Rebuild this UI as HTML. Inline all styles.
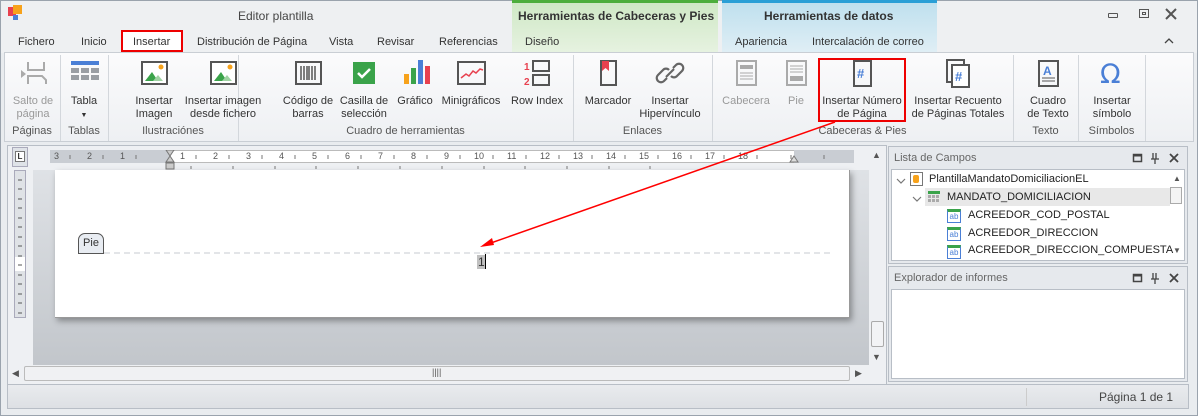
<!DOCTYPE html>
<html><head><meta charset="utf-8"><style>
*{box-sizing:border-box;margin:0;padding:0}
body{width:1198px;height:416px;overflow:hidden;background:#dfe3e8;font-family:"Liberation Sans",sans-serif;font-size:11px;color:#333;position:relative}
.a{position:absolute}
.t{position:absolute;white-space:nowrap}
.btn{position:absolute;top:58px;text-align:center;line-height:13px;font-size:11px;color:#333}
.btn svg{display:block;margin:0 auto 7px}
.gl{position:absolute;top:125px;font-size:11px;color:#555;text-align:center}
.sep{position:absolute;top:55px;width:1px;height:86px;background:#d3d7dc}
.dis{color:#999}
</style></head><body>
<div class="a" style="left:0;top:0;width:1198px;height:416px;border:1px solid #9aa3ad;background:#e9ecef"></div>
<div class="a" style="left:1px;top:1px;width:1196px;height:52px;background:#eef0f2"></div>
<div class="a" style="left:8px;top:7px;width:8px;height:9px;background:#e8414f"></div>
<div class="a" style="left:13px;top:5px;width:9px;height:9px;background:#f7a21b"></div>
<div class="a" style="left:13px;top:15px;width:5px;height:5px;background:#4a7fd6"></div>
<div class="t" style="left:238px;top:9px;font-size:12px;color:#444">Editor plantilla</div>
<div class="a" style="left:512px;top:0;width:206px;height:52px;background:linear-gradient(#cfe8c6,#e6f2e0);border-top:3px solid #4cae3c"></div>
<div class="t" style="left:518px;top:9px;font-size:12px;font-weight:bold;color:#333">Herramientas de Cabeceras y Pies</div>
<div class="a" style="left:722px;top:0;width:215px;height:52px;background:linear-gradient(#bfe0ee,#dfeef5);border-top:3px solid #2a9fd6"></div>
<div class="t" style="left:764px;top:9px;font-size:12px;font-weight:bold;color:#333">Herramientas de datos</div>
<div class="a" style="left:1108px;top:13px;width:10px;height:5px;border:1px solid #555;border-radius:1px"></div>
<div class="a" style="left:1139px;top:9px;width:10px;height:9px;border:1px solid #555"></div>
<div class="a" style="left:1142px;top:12px;width:4px;height:3px;border:1px solid #555"></div>
<svg class="a" style="left:1165px;top:8px" width="12" height="12"><path d="M1 1l10 10M11 1L1 11" stroke="#555" stroke-width="2"/></svg>
<svg class="a" style="left:1164px;top:37px" width="10" height="8"><path d="M1 6l4-4 4 4" stroke="#444" stroke-width="1.3" fill="none"/></svg>
<div class="t" style="left:18px;top:36px">Fichero</div>
<div class="t" style="left:81px;top:36px">Inicio</div>
<div class="a" style="left:121px;top:30px;width:62px;height:22px;border:2px solid #e00;background:#fff"></div>
<div class="t" style="left:133px;top:36px">Insertar</div>
<div class="t" style="left:197px;top:36px">Distribución de Página</div>
<div class="t" style="left:329px;top:36px">Vista</div>
<div class="t" style="left:377px;top:36px">Revisar</div>
<div class="t" style="left:439px;top:36px">Referencias</div>
<div class="t" style="left:525px;top:36px">Diseño</div>
<div class="t" style="left:735px;top:36px">Apariencia</div>
<div class="t" style="left:812px;top:36px">Intercalación de correo</div>
<div class="a" style="left:4px;top:52px;width:1190px;height:90px;background:linear-gradient(#fbfbfc,#eef0f3);border:1px solid #c9ced4"></div>
<div class="sep" style="left:60px"></div><div class="sep" style="left:108px"></div><div class="sep" style="left:238px"></div><div class="sep" style="left:573px"></div><div class="sep" style="left:712px"></div><div class="sep" style="left:1013px"></div><div class="sep" style="left:1078px"></div><div class="sep" style="left:1145px"></div>
<div class="btn dis" style="left:8px;width:50px"><svg width="30" height="30"><path d="M10 4v8h16V4M10 26v-8h14l4 4v4" stroke="#aaa" stroke-width="2" fill="none"/><path d="M3 12l5 4-5 4z" fill="#aaa"/></svg>Salto de<br>página</div>
<div class="btn" style="left:64px;width:40px"><svg width="30" height="30"><rect x="2" y="3" width="28" height="4" fill="#4a7fd6"/><g fill="#9a9ea4"><rect x="2" y="10" width="8" height="5"/><rect x="12" y="10" width="8" height="5"/><rect x="22" y="10" width="8" height="5"/><rect x="2" y="17" width="8" height="5"/><rect x="12" y="17" width="8" height="5"/><rect x="22" y="17" width="8" height="5"/></g></svg>Tabla<br><span style="font-size:7px">▼</span></div>
<div class="btn" style="left:130px;width:48px"><svg width="30" height="30"><rect x="3" y="4" width="25" height="22" fill="#fff" stroke="#555" stroke-width="2"/><path d="M6 23l7-9 6 9z" fill="#3aa34a"/><path d="M14 23l5-6 5 6z" fill="#9fd3a3"/><circle cx="22" cy="9" r="2.5" fill="#f7a21b"/></svg>Insertar<br>Imagen</div>
<div class="btn" style="left:180px;width:86px"><svg width="30" height="30"><rect x="3" y="4" width="25" height="22" fill="#fff" stroke="#555" stroke-width="2"/><path d="M6 23l7-9 6 9z" fill="#3aa34a"/><path d="M14 23l5-6 5 6z" fill="#9fd3a3"/><circle cx="22" cy="9" r="2.5" fill="#f7a21b"/></svg>Insertar imagen<br>desde fichero</div>
<div class="btn" style="left:280px;width:56px"><svg width="30" height="30"><rect x="3" y="4" width="25" height="22" fill="none" stroke="#555" stroke-width="2"/><path d="M8 8v14M11 8v14M14 8v14M16 8v14M19 8v14M22 8v14" stroke="#555" stroke-width="1.5"/></svg>Código de<br>barras</div>
<div class="btn" style="left:339px;width:50px"><svg width="30" height="30"><rect x="4" y="4" width="22" height="22" fill="#3aa34a"/><path d="M9 15l4 4 8-8" stroke="#fff" stroke-width="2.5" fill="none"/></svg>Casilla de<br>selección</div>
<div class="btn" style="left:394px;width:42px"><svg width="30" height="30"><rect x="4" y="16" width="5" height="10" fill="#f7a21b"/><rect x="11" y="10" width="5" height="16" fill="#3aa34a"/><rect x="18" y="2" width="5" height="24" fill="#4a7fd6"/><rect x="25" y="8" width="5" height="18" fill="#e8414f"/></svg>Gráfico</div>
<div class="btn" style="left:440px;width:62px"><svg width="30" height="30"><rect x="2" y="4" width="27" height="22" fill="none" stroke="#555" stroke-width="2"/><path d="M5 20l5-4 3 2 4-5 3 2 4-4 3 1" stroke="#e8414f" stroke-width="1.5" fill="none"/></svg>Minigráficos</div>
<div class="btn" style="left:506px;width:62px"><svg width="30" height="30"><text x="2" y="12" font-size="10" font-weight="bold" fill="#e8414f" font-family="Liberation Sans">1</text><text x="2" y="27" font-size="10" font-weight="bold" fill="#e8414f" font-family="Liberation Sans">2</text><rect x="11" y="3" width="16" height="10" fill="none" stroke="#555" stroke-width="2"/><rect x="11" y="17" width="16" height="10" fill="none" stroke="#555" stroke-width="2"/></svg>Row Index</div>
<div class="btn" style="left:580px;width:56px"><svg width="30" height="30"><rect x="8" y="3" width="15" height="24" fill="none" stroke="#555" stroke-width="2"/><path d="M9 3h7v10l-3.5-3-3.5 3z" fill="#e8414f"/></svg>Marcador</div>
<div class="btn" style="left:638px;width:64px"><svg width="30" height="30"><path d="M12 20l-3 3a4 4 0 01-6-6l5-5a4 4 0 016 0M18 10l3-3a4 4 0 016 6l-5 5a4 4 0 01-6 0M11 19l8-8" stroke="#666" stroke-width="2.2" fill="none"/></svg>Insertar<br>Hipervínculo</div>
<div class="btn dis" style="left:718px;width:56px"><svg width="30" height="30"><rect x="6" y="3" width="19" height="24" fill="none" stroke="#aaa" stroke-width="2"/><rect x="9" y="7" width="13" height="4" fill="#aaa"/><path d="M9 15h13M9 18h13M9 21h13" stroke="#aaa"/></svg>Cabecera</div>
<div class="btn dis" style="left:778px;width:36px"><svg width="30" height="30"><rect x="6" y="3" width="19" height="24" fill="none" stroke="#aaa" stroke-width="2"/><path d="M9 8h13M9 11h13M9 14h13" stroke="#aaa"/><rect x="9" y="18" width="13" height="5" fill="#aaa"/></svg>Pie</div>
<div class="btn" style="left:818px;width:88px"><svg width="30" height="30"><rect x="7" y="3" width="17" height="25" fill="none" stroke="#555" stroke-width="2"/><text x="10" y="20" font-size="13" font-weight="bold" fill="#4a7fd6" font-family="Liberation Sans">#</text></svg>Insertar Número<br>de Página</div>
<div class="a" style="left:818px;top:58px;width:88px;height:64px;border:2px solid #e00"></div>
<div class="btn" style="left:910px;width:96px"><svg width="30" height="30"><rect x="4" y="2" width="17" height="22" fill="none" stroke="#555" stroke-width="2"/><rect x="9" y="7" width="17" height="22" fill="#fff" stroke="#555" stroke-width="2"/><text x="12" y="23" font-size="13" font-weight="bold" fill="#4a7fd6" font-family="Liberation Sans">#</text></svg>Insertar Recuento<br>de Páginas Totales</div>
<div class="btn" style="left:1020px;width:56px"><svg width="30" height="30"><rect x="6" y="3" width="19" height="25" fill="none" stroke="#555" stroke-width="2"/><text x="10" y="17" font-size="12" font-weight="bold" fill="#4a7fd6" font-family="Liberation Sans">A</text><path d="M9 20h13M9 23h13" stroke="#555"/></svg>Cuadro<br>de Texto</div>
<div class="btn" style="left:1084px;width:56px"><svg width="30" height="30"><text x="3" y="25" font-size="27" fill="#4a7fd6" font-family="DejaVu Sans">Ω</text></svg>Insertar<br>símbolo</div>
<div class="gl" style="left:4px;width:56px">Páginas</div>
<div class="gl" style="left:60px;width:48px">Tablas</div>
<div class="gl" style="left:108px;width:130px">Ilustraciónes</div>
<div class="gl" style="left:238px;width:335px">Cuadro de herramientas</div>
<div class="gl" style="left:573px;width:139px">Enlaces</div>
<div class="gl" style="left:712px;width:301px">Cabeceras &amp; Pies</div>
<div class="gl" style="left:1013px;width:65px">Texto</div>
<div class="gl" style="left:1078px;width:67px">Símbolos</div>
<div class="a" style="left:7px;top:145px;width:880px;height:240px;background:#eef0f3;border:1px solid #b8bec6"></div>
<div class="a" style="left:12px;top:147px;width:16px;height:20px;background:#dfe3e8;border:1px solid #aab"></div>
<div class="a" style="left:15px;top:151px;width:10px;height:11px;background:#fff;border:1px solid #777;font-size:8px;font-weight:bold;line-height:9px;text-align:center">L</div>
<div class="a" style="left:50px;top:150px;width:804px;height:13px;background:#fff;border:1px solid #bbb"></div>
<div class="a" style="left:50px;top:150px;width:120px;height:13px;background:#c9cdd3"></div>
<div class="a" style="left:794px;top:150px;width:60px;height:13px;background:#c9cdd3"></div>
<div class="t" style="left:50px;top:151px;font-size:9px;color:#555;width:804px;height:12px">
<span class="a" style="left:4px">3</span><span class="a" style="left:37px">2</span><span class="a" style="left:70px">1</span><span class="a" style="left:130px">1</span><span class="a" style="left:163px">2</span><span class="a" style="left:196px">3</span><span class="a" style="left:229px">4</span><span class="a" style="left:262px">5</span><span class="a" style="left:295px">6</span><span class="a" style="left:328px">7</span><span class="a" style="left:361px">8</span><span class="a" style="left:394px">9</span><span class="a" style="left:424px">10</span><span class="a" style="left:457px">11</span><span class="a" style="left:490px">12</span><span class="a" style="left:523px">13</span><span class="a" style="left:556px">14</span><span class="a" style="left:589px">15</span><span class="a" style="left:622px">16</span><span class="a" style="left:655px">17</span><span class="a" style="left:688px">18</span></div>
<svg class="a" style="left:50px;top:150px" width="804" height="20"><g stroke="#777"><path d="M20 5v4M53 5v4M86 5v4M146 5v4M179 5v4M212 5v4M245 5v4M278 5v4M311 5v4M344 5v4M377 5v4M410 5v4M443 5v4M476 5v4M509 5v4M542 5v4M575 5v4M608 5v4M641 5v4M674 5v4M707 5v4M741 5v4M774 5v4M141 16v3M183 16v3M225 16v3M266 16v3M308 16v3M350 16v3M392 16v3M434 16v3M475 16v3M517 16v3M559 16v3M600 16v3"/></g><path d="M116 0h8l-4 6 4 6h-8l4-6z" fill="#ccc" stroke="#777"/><rect x="116" y="13" width="8" height="6" fill="#ccc" stroke="#777"/><path d="M740 12l4-6 4 6z" fill="#ddd" stroke="#777"/></svg>
<div class="a" style="left:14px;top:170px;width:12px;height:148px;background:#dfe2e6;border:1px solid #aab"></div>
<div class="a" style="left:15px;top:257px;width:10px;height:14px;background:#fff"></div>
<svg class="a" style="left:14px;top:170px" width="12" height="148"><g stroke="#555"><path d="M4 10h4M4 19h4M4 29h4M4 38h4M4 48h4M4 57h4M4 67h4M4 76h4M4 86h4M4 95h4M4 105h4M4 114h4M4 124h4M4 133h4M4 143h4"/></g></svg>
<div class="a" style="left:33px;top:170px;width:836px;height:195px;background:linear-gradient(#dfe2e6,#c2c6cb)"></div>
<div class="a" style="left:55px;top:170px;width:795px;height:148px;background:#fff;box-shadow:2px 3px 6px rgba(0,0,0,.35);border-right:1px solid #999;border-bottom:1px solid #999"></div>
<div class="a" style="left:78px;top:233px;width:26px;height:21px;background:#e8ecf2;border:1px solid #555;border-radius:7px 7px 0 0;font-size:11px;line-height:19px;text-align:center">Pie</div>
<div class="a" style="left:104px;top:252px;width:726px;border-top:2px dashed #e3e5e8"></div>
<div class="a" style="left:477px;top:255px;width:8px;height:14px;background:#c0c0c0"></div>
<div class="t" style="left:478px;top:255px;font-size:12px">1</div>
<div class="a" style="left:485px;top:254px;width:1px;height:15px;background:#000"></div>
<div class="a" style="left:869px;top:150px;width:17px;height:215px;background:#eef0f3"></div>
<div class="t" style="left:872px;top:150px;font-size:9px;color:#555">▲</div>
<div class="a" style="left:871px;top:321px;width:13px;height:26px;background:#f2f3f5;border:1px solid #aaa;border-radius:2px"></div>
<div class="t" style="left:872px;top:352px;font-size:9px;color:#555">▼</div>
<div class="a" style="left:8px;top:365px;width:861px;height:19px;background:#eef0f3"></div>
<div class="t" style="left:12px;top:368px;font-size:9px;color:#555">◀</div>
<div class="a" style="left:24px;top:366px;width:826px;height:15px;background:#f0f1f3;border:1px solid #bbb;border-radius:2px"></div>
<div class="t" style="left:432px;top:367px;font-size:9px;color:#555">||||</div>
<div class="t" style="left:855px;top:368px;font-size:9px;color:#555">▶</div>
<!-- right panels -->
<div class="a" style="left:888px;top:146px;width:300px;height:118px;background:#e6e9ed;border:1px solid #b8bec6"></div>
<div class="t" style="left:894px;top:152px;font-size:11px;color:#666">Lista de Campos</div>
<svg class="a" style="left:1132px;top:152px" width="52" height="12"><rect x="1.5" y="2.5" width="8" height="7" fill="none" stroke="#444" stroke-width="1.5"/><rect x="1.5" y="2.5" width="8" height="2" fill="#444"/><path d="M21 1v6M24 1v6M19 7h8M23 7v5" stroke="#444" stroke-width="1.3" fill="none"/><path d="M38 2l8 8M46 2l-8 8" stroke="#444" stroke-width="1.8"/></svg>
<div class="a" style="left:891px;top:169px;width:294px;height:92px;background:#fff;border:1px solid #b8bec6"></div>
<svg class="a" style="left:896px;top:177px" width="10" height="8"><path d="M1 2l4 4 4-4" stroke="#777" stroke-width="1.2" fill="none"/></svg>
<div class="a" style="left:910px;top:172px;width:13px;height:14px;border:1px solid #777;background:#fff"></div>
<div class="a" style="left:913px;top:175px;width:6px;height:8px;background:#f7a21b;border-radius:2px"></div>
<div class="t" style="left:929px;top:173px;font-size:11px;color:#222">PlantillaMandatoDomiciliacionEL</div>
<div class="a" style="left:925px;top:188px;width:245px;height:18px;background:#e8e8e8"></div>
<svg class="a" style="left:912px;top:195px" width="10" height="8"><path d="M1 2l4 4 4-4" stroke="#777" stroke-width="1.2" fill="none"/></svg>
<svg class="a" style="left:928px;top:191px" width="14" height="12"><rect width="12" height="3" fill="#3aa34a"/><g fill="#aaa"><rect y="4" width="3" height="3"/><rect x="4" y="4" width="3" height="3"/><rect x="8" y="4" width="3" height="3"/><rect y="8" width="3" height="3"/><rect x="4" y="8" width="3" height="3"/><rect x="8" y="8" width="3" height="3"/></g></svg>
<div class="t" style="left:947px;top:191px;font-size:11px;color:#222">MANDATO_DOMICILIACION</div>
<div class="a" style="left:947px;top:209px;width:14px;height:14px;border:1px solid #4a7fd6;border-top:3px solid #3aa34a;font-size:8px;color:#4a7fd6;line-height:10px;text-align:center">ab</div>
<div class="t" style="left:968px;top:209px;font-size:11px;color:#222">ACREEDOR_COD_POSTAL</div>
<div class="a" style="left:947px;top:227px;width:14px;height:14px;border:1px solid #4a7fd6;border-top:3px solid #3aa34a;font-size:8px;color:#4a7fd6;line-height:10px;text-align:center">ab</div>
<div class="t" style="left:968px;top:227px;font-size:11px;color:#222">ACREEDOR_DIRECCION</div>
<div class="a" style="left:947px;top:245px;width:14px;height:14px;border:1px solid #4a7fd6;border-top:3px solid #3aa34a;font-size:8px;color:#4a7fd6;line-height:10px;text-align:center">ab</div>
<div class="t" style="left:968px;top:244px;font-size:11px;color:#222">ACREEDOR_DIRECCION_COMPUESTA</div>
<div class="t" style="left:1173px;top:174px;font-size:8px;color:#555">▲</div>
<div class="a" style="left:1170px;top:187px;width:12px;height:17px;border:1px solid #aaa;background:#f4f4f4"></div>
<div class="t" style="left:1173px;top:246px;font-size:8px;color:#555">▼</div>
<div class="a" style="left:888px;top:266px;width:300px;height:116px;background:#e6e9ed;border:1px solid #b8bec6"></div>
<div class="t" style="left:894px;top:272px;font-size:11px;color:#666">Explorador de informes</div>
<svg class="a" style="left:1132px;top:272px" width="52" height="12"><rect x="1.5" y="2.5" width="8" height="7" fill="none" stroke="#444" stroke-width="1.5"/><rect x="1.5" y="2.5" width="8" height="2" fill="#444"/><path d="M21 1v6M24 1v6M19 7h8M23 7v5" stroke="#444" stroke-width="1.3" fill="none"/><path d="M38 2l8 8M46 2l-8 8" stroke="#444" stroke-width="1.8"/></svg>
<div class="a" style="left:891px;top:289px;width:294px;height:90px;background:#fff;border:1px solid #b8bec6"></div>
<div class="a" style="left:7px;top:384px;width:1182px;height:25px;background:linear-gradient(#e9ebee,#dde0e4);border:1px solid #b8bec6"></div>
<div class="a" style="left:1026px;top:388px;width:1px;height:18px;background:#ccc"></div>
<div class="t" style="left:1099px;top:390px;font-size:12px;color:#444">Página 1 de 1</div>
<svg class="a" style="left:0;top:0" width="1198" height="416"><line x1="835" y1="122" x2="488" y2="244" stroke="#f00" stroke-width="1.5"/><path d="M480 247l12-9 2 7z" fill="#f00"/></svg>
</body></html>
